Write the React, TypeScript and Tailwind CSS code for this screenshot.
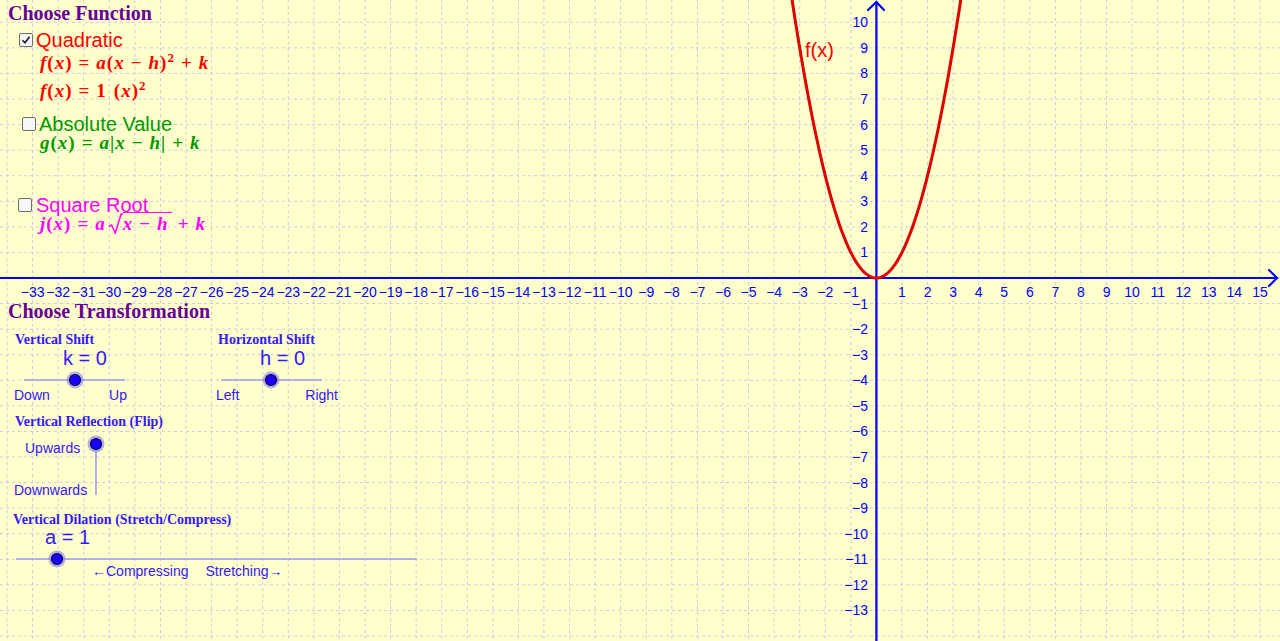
import React from "react";

const U = 25.57;
const OX = 876.4;
const OY = 278;
const W = 1280;
const H = 641;

const minus = (n: number) => (n < 0 ? "\u2212" + -n : String(n));

// parabola y = x^2 in screen coords
const curve = (() => {
  const pts: string[] = [];
  for (let x = -3.45; x <= 3.45001; x += 0.05) {
    pts.push(`${(OX + x * U).toFixed(2)},${(OY - x * x * U).toFixed(2)}`);
  }
  return "M" + pts.join(" L");
})();

function Slider({ x1, y1, x2, y2, px, py }: { x1: number; y1: number; x2: number; y2: number; px: number; py: number }) {
  return (
    <g>
      <line x1={x1} y1={y1} x2={x2} y2={y2} stroke="#9d9af2" strokeWidth={1.6} />
      <circle cx={px} cy={py} r={8.5} fill="#8a86ee" opacity={0.65} />
      <circle cx={px} cy={py} r={5.5} fill="#1c00ff" stroke="#0a0040" strokeWidth={1.2} />
    </g>
  );
}

function Graph() {
  const vx: number[] = [];
  for (let n = -35; n <= 16; n++) vx.push(OX + n * U);
  const hy: number[] = [];
  for (let m = -15; m <= 11; m++) hy.push(OY - m * U);
  const xl: number[] = [];
  for (let n = -33; n <= 15; n++) if (n !== 0) xl.push(n);
  const yl: number[] = [];
  for (let m = -13; m <= 10; m++) if (m !== 0) yl.push(m);

  return (
    <svg className="absolute inset-0" width={W} height={H} viewBox={`0 0 ${W} ${H}`}>
      <g stroke="#c9c9ec" strokeWidth={1} strokeDasharray="3 3">
        {vx.map((x) => (
          <line key={"v" + x} x1={x} y1={0} x2={x} y2={H} />
        ))}
        {hy.map((y) => (
          <line key={"h" + y} x1={0} y1={y} x2={W} y2={y} />
        ))}
      </g>

      {/* axes */}
      <g stroke="#0000ff" strokeWidth={2.2} fill="none" strokeLinecap="round">
        <line x1={0} y1={OY} x2={1277} y2={OY} />
        <polyline points={`1269,270 1277,${OY} 1269,286`} />
        <line x1={OX} y1={H} x2={OX} y2={2} />
        <polyline points={`868,10 ${OX},2 884,10`} />
      </g>

      <g fill="#0000ff" fontFamily="'Liberation Sans', Arial, sans-serif" fontSize={14}>
        {xl.map((n) => (
          <text key={"xl" + n} x={OX + n * U} y={297} textAnchor="middle">
            {minus(n)}
          </text>
        ))}
        {yl.map((m) => (
          <text key={"yl" + m} x={868} y={OY - m * U + 5} textAnchor="end">
            {minus(m)}
          </text>
        ))}
      </g>

      <path d={curve} stroke="#de0000" strokeWidth={3} fill="none" />
      <text x={805} y={57} fill="#ff0000" fontFamily="'Liberation Sans', Arial, sans-serif" fontSize={20}>
        f(x)
      </text>

      <Slider x1={24} y1={380} x2={125} y2={380} px={75} py={380} />
      <Slider x1={221} y1={380} x2={322} y2={380} px={271} py={380} />
      <Slider x1={96} y1={444} x2={96} y2={495} px={96} py={444} />
      <Slider x1={16} y1={559} x2={417} y2={559} px={57} py={559} />
    </svg>
  );
}

function Check({ on }: { on?: boolean }) {
  return (
    <div className="w-[14px] h-[14px] shrink-0 rounded-[2px] border-[1.5px] border-[#6e6e6e] bg-[#f6f6f6] flex items-center justify-center">
      {on && (
        <svg width="10" height="10" viewBox="0 0 10 10">
          <path d="M1.5 5.2 L4 7.8 L8.6 1.8" stroke="#1a1a40" strokeWidth={1.6} fill="none" />
        </svg>
      )}
    </div>
  );
}

const Op = ({ c }: { c: string }) => <span className="not-italic mx-[6px]">{c}</span>;
const V = ({ c }: { c: string }) => <span className="italic">{c}</span>;
const Sup = ({ c }: { c: string }) => <span className="not-italic text-[13px] leading-[0px] align-[7px]">{c}</span>;

const head = "h-[20px] font-['Liberation_Serif',serif] font-bold text-[20px] leading-[20px] text-[#660099] whitespace-nowrap";
const label = "font-['Liberation_Sans',Arial,sans-serif] text-[20px] leading-[18px] whitespace-nowrap";
const math = "h-[16px] font-['Liberation_Serif',serif] font-bold text-[19px] leading-[16px] tracking-[1px] whitespace-nowrap";
const sub = "h-[14px] font-['Liberation_Serif',serif] font-bold text-[14px] leading-[14px] text-[#3318ff] whitespace-nowrap";
const small = "h-[14px] font-['Liberation_Sans',Arial,sans-serif] text-[14px] leading-[14px] text-[#3318ff] whitespace-nowrap";
const value = "h-[18px] font-['Liberation_Sans',Arial,sans-serif] text-[20px] leading-[18px] text-[#3318ff] whitespace-nowrap";

function FunctionPanel() {
  return (
    <div className="flex flex-col">
      <div className={head + " ml-[8px]"}>Choose Function</div>

      <div className="flex items-center h-[18px] gap-[3px] ml-[19px] mt-[8px]">
        <Check on />
        <span className={label + " text-[#ff0000]"}>Quadratic</span>
      </div>
      <div className={math + " ml-[40px] mt-[6px] text-[#ff0000]"}>
        <V c="f" />(<V c="x" />)<Op c="=" /><V c="a" />(<V c="x" /><Op c={"\u2212"} /><V c="h" />)<Sup c="2" /><Op c="+" /><V c="k" />
      </div>
      <div className={math + " ml-[40px] mt-[12px] text-[#ff0000]"}>
        <V c="f" />(<V c="x" />)<Op c="=" />1<span className="ml-[7px]" />(<V c="x" />)<Sup c="2" />
      </div>

      <div className="flex items-center h-[18px] gap-[3px] ml-[22px] mt-[16px]">
        <Check />
        <span className={label + " text-[#009900]"}>Absolute Value</span>
      </div>
      <div className={math + " ml-[40px] mt-[2px] text-[#009900]"}>
        <V c="g" />(<V c="x" />)<Op c="=" /><V c="a" />|<V c="x" /><Op c={"\u2212"} /><V c="h" />|<Op c="+" /><V c="k" />
      </div>

      <div className="flex items-center h-[18px] gap-[4px] ml-[18px] mt-[45px]">
        <Check />
        <span className={label + " text-[#ff00ff]"}>Square Root</span>
      </div>
      <div className={math + " ml-[40px] mt-[2px] text-[#ff00ff]"}>
        <V c="j" />(<V c="x" />)<Op c="=" /><V c="a" />
        <svg className="inline-block align-[-5px] -mt-[4px] ml-[2px]" width="15" height="22" viewBox="0 0 15 22">
          <path d="M1 13.5 L3.6 12 L7.2 20 L13.2 1 L15 1" stroke="#ff00ff" strokeWidth={1.5} fill="none" />
        </svg>
        <span className="border-t-[1.5px] border-[#ff00ff] pr-[3px]">
          <V c="x" /><Op c={"\u2212"} /><V c="h" />
        </span>
        <Op c="+" /><V c="k" />
      </div>
    </div>
  );
}

function TransformPanel() {
  return (
    <div className="flex flex-col">
      <div className={head + " ml-[8px]"}>Choose Transformation</div>

      <div className="flex mt-[12px] ml-[15px]">
        <div className="flex flex-col w-[203px]">
          <div className={sub}>Vertical Shift</div>
          <div className={value + " ml-[48px] mt-[2px]"}>k = 0</div>
          <div className={"flex justify-between w-[113px] -ml-[1px] mt-[21px] " + small}>
            <span>Down</span>
            <span>Up</span>
          </div>
        </div>
        <div className="flex flex-col">
          <div className={sub}>Horizontal Shift</div>
          <div className={value + " ml-[42px] mt-[2px]"}>h = 0</div>
          <div className={"flex justify-between w-[122px] -ml-[2px] mt-[21px] " + small}>
            <span>Left</span>
            <span>Right</span>
          </div>
        </div>
      </div>

      <div className={sub + " ml-[15px] mt-[13px]"}>Vertical Reflection (Flip)</div>
      <div className={small + " ml-[25px] mt-[12px]"}>Upwards</div>
      <div className={small + " ml-[14px] mt-[28px]"}>Downwards</div>

      <div className={sub + " ml-[13px] mt-[16px]"}>Vertical Dilation (Stretch/Compress)</div>
      <div className={value + " ml-[45px] mt-[1px]"}>a = 1</div>
      <div className={"flex gap-[17px] ml-[92px] mt-[18px] " + small}>
        <span>{"\u2190"}Compressing</span>
        <span>Stretching{"\u2192"}</span>
      </div>
    </div>
  );
}

export default function App() {
  return (
    <div className="relative w-[1280px] h-[641px] overflow-hidden bg-[#ffffcc]">
      <Graph />
      {/* control texts lie over the graph canvas */}
      <div className="absolute left-0 top-0 w-[440px] pt-[3px] flex flex-col gap-[69px]">
        <FunctionPanel />
        <TransformPanel />
      </div>
    </div>
  );
}
